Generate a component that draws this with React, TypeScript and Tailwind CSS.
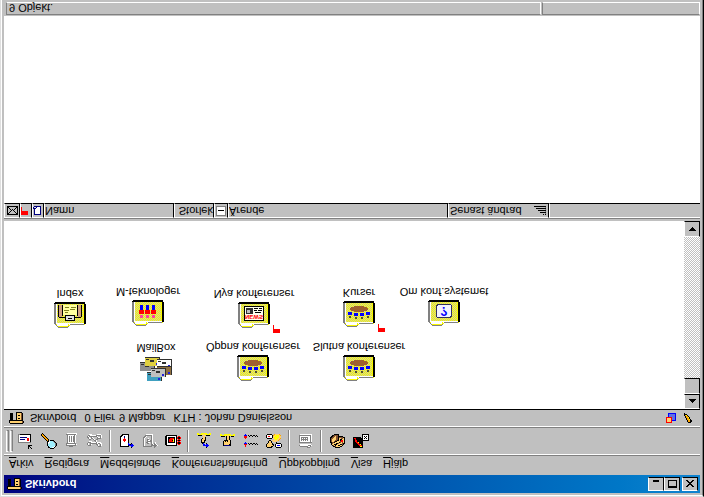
import type { ReactNode } from 'react';
import clsx from 'clsx';

const PALETTE: Record<string, string> = {
  k: '#000000',
  w: '#ffffff',
  g: '#808080',
  s: '#dcdcdc',
  r: '#ff0000',
  b: '#0000ff',
  d: '#000080',
  y: '#ffff00',
  t: '#ffd070',
  o: '#ffa500',
  n: '#805030',
  c: '#a0f0ff',
  v: '#6070e0',
};

interface SpriteProps {
  rows: string[];
}

// Pixel icon: one character per pixel, a dot is transparent
function Sprite({ rows }: SpriteProps) {
  const width = Math.max(...rows.map((row) => row.length));
  return (
    <svg
      width={width}
      height={rows.length}
      viewBox={`0 0 ${width} ${rows.length}`}
      shapeRendering="crispEdges"
      aria-hidden="true"
      className="shrink-0"
    >
      {rows.map((row, y) =>
        row
          .split('')
          .map((ch, x) =>
            PALETTE[ch] ? <rect key={`${x}-${y}`} x={x} y={y} width={1} height={1} fill={PALETTE[ch]} /> : null
          )
      )}
    </svg>
  );
}

const DESK = [
  '.kkkkkkkkkkkkk.',
  'kttttttttttttnk',
  'kttttttttttttnk',
  'kkkkkkkkkkkkkk.',
  '.kkk...kttttnk.',
  '.kkk...ktkktnk.',
  '.kkk...kttttnk.',
  '.kkk...kttttnk.',
  '.kkk...ktkktnk.',
  '.kkk...kttttnk.',
  '.kkk...kttttnk.',
  '.......kkkkkk..',
];

const NEW_MAIL = [
  '..........k..k..',
  '..........k.k...',
  '..........kk....',
  '..........kkkk..',
  '................',
  '................',
  'ggggggggggggg...',
  'gwwwwwwwwwwwk...',
  'gwwwwwwwwrrwk...',
  'gwdddddwwrrwk...',
  'gwwwwwwwwrrwk...',
  'gwdddddddwwwk...',
  'gwwwwwwwwwwwk...',
  'gwwwwwwwwwwwk...',
  'ggkkkkkkkkkkk...',
  '................',
];

const SEARCH = [
  '.........kkkk...',
  '.......kkccwwk..',
  '.......kcccccwk.',
  '......kcccccccgk',
  '......kcccccccgk',
  '......kwccccccgk',
  '......kwwccccgk.',
  '......kkwcccgk..',
  '.....kok.kkkk...',
  '....kook........',
  '...kook.........',
  '..kook..........',
  '.kook...........',
  'kook............',
  'kok.............',
  '.k..............',
];

const TRASH = [
  '................',
  '.....gggg.......',
  '..gggggggggg....',
  '..gwwwwwwwwgw...',
  '..gggggggggg....',
  '...gwwwwwwgw....',
  '...gwgwgwggw....',
  '...gwgwgwggw....',
  '...gwgwgwggw....',
  '...gwgwgwggw....',
  '...gwgwgwggw....',
  '...gwgwgwggw....',
  '...gwwwwwwgw....',
  '..ggggggggggw...',
  '...wwwwwwwwww...',
];

const KEYS = [
  '................',
  '...........ggg..',
  '.ggg......gw.gw.',
  'gw.gw....ggw.gw.',
  'gw.gggggggwggww.',
  '.gggwwwwwgwwww..',
  '..www...gw......',
  '.......ggw......',
  '..gg..gw.gg.....',
  '.gwwggw...gggg..',
  'ggw.gw....gwwgw.',
  'gwggggggggw..gw.',
  '.ggwwwwwwgggggw.',
  '..www.....wwww..',
];

const REPLY = [
  '............k...',
  '.kkkkkkkkk..bb..',
  '.kwwwwwwwkbbbbb.',
  '.kwwwwwwwbbkbb..',
  '.kwwwwwwwb..k...',
  '.kwwwwwwwk......',
  '.kwwwrwwwk......',
  '.kwwrrrwwk......',
  '.kwwrrrwwk......',
  '.kwwwrwwwk......',
  '.kwwwdwwwk......',
  '.kkwwdwwwk......',
  '..kkwwwwwk......',
  '...kkkkkkk......',
];

const REPLY_OFF = [
  '............g...',
  '.ggggggggg..gg..',
  '.gw......ggggggw',
  '.gw......ggwggw.',
  '.gw..gg..gw.gw..',
  '.gw.ggww.gw..w..',
  '.gw..gggggw.....',
  '.gw..gwwggw.....',
  '.gw..gg..gw.....',
  '.gw...w..gw.....',
  '.ggw.....gw.....',
  '..ggw....gw.....',
  '...gggggggw.....',
  '....wwwwwww.....',
];

const BOOK = [
  '................',
  '.kkkkkkkkkkk....',
  'kkwwwwwwwwwk.rr.',
  'kkwwwwwwwwwkrkkr',
  'kkwkkkkkkkwkrkkr',
  'kkwkrrrrykwk.rr.',
  'kkwkrrrkykwkrkkr',
  'kkwkrrrrykwk.rr.',
  'kkwkkrrrrkwkrkkr',
  'kkwkkkkkkkwkrkkr',
  'kkwwwwwwwwwk.rr.',
  '.kkkkkkkkkkk....',
];

const POINT_MOVE = [
  '.........k......',
  '.........bb.....',
  '......bbbbbb....',
  '......bb.bb.....',
  '.....kb..k......',
  '....kkkk........',
  '....kttk........',
  '....kttkk.......',
  '....ktttk.......',
  '.....kttk.......',
  '......ttk.......',
  '......tt........',
  '.kkkk.tt.kkkk...',
  'yyyyyyttyyyyyy..',
  'yy..yyyyyy..yy..',
];

const POINT = [
  '................',
  '................',
  '...kddddddk.....',
  '...ktttttkk.....',
  '...kttttttk.....',
  '...kttttttk.....',
  '...ktktkttk.....',
  '....kkkkttk.....',
  '......kttk......',
  '......kttk......',
  '......kttk......',
  '.kkkk.kttk.kkk..',
  'yyyyyyyttyyyyyy.',
  'yy..yyyyyyy..yy.',
];

const THREADS = [
  '..r.............',
  '..r.............',
  '.rrr..k..k..k.k.',
  '.bbb.k.kk.kk.k..',
  '..b.............',
  '................',
  '................',
  '................',
  '..r.............',
  '.rrr............',
  '.rrr..k..k..k.k.',
  '.bbb.k.kk.kk.k..',
  '..b.............',
];

const PEOPLE = [
  '.kkkkk....kkkkk.',
  'kttttkk..kwwwwwk',
  'kttttttk.kwbbbwk',
  'ktttttkk.kwwwwwk',
  '.kttttk...kkkkk.',
  '..kttk....k.....',
  '..kttk.tttt.....',
  '...kk.tttttto...',
  '........tyytto..',
  '.kkkkk.tyyyytto.',
  'kwwwwwktyyyyytt.',
  'kwrrwwkttyyyytt.',
  'kwwwwwkoytyyyto.',
  '.kkkkk..otttto..',
];

const DIAL_OFF = [
  '.........ggg....',
  '..ggggggggwwg...',
  '.gwwwwwwwwgggw..',
  '..wwwwwwwwwww...',
  '................',
  '.ggggggggggggg..',
  '.gwwwwwwwwwwgw..',
  '.gwgwgwgwgwwgw..',
  '.gwgggggggwwgw..',
  '.gwgwgwgwgwwgw..',
  '.gwgggggggwwgw..',
  '.gwwwwwwwwwwgw..',
  '.ggggggggggggw..',
  '..wwwwwwwwwwww..',
];

const BOX = [
  '.....kkkkk......',
  '...kknttttkk....',
  '..kntkttkkttk...',
  '.kttkkktttkknk..',
  '.kntttkkntttnkk.',
  'kknnkttttkntntk.',
  'knttnkktttnrrtk.',
  'kntttnnkktkrrtk.',
  'knttttnnktkkttk.',
  'knntttnnkttnntk.',
  'kknnttnnknnnnkk.',
  '.kknntnnkkkkk...',
  '..kknnnnk.......',
  '....kkkkk.......',
];

const EXIT = [
  'kkkkkkkkkk......',
  'kkkkkkkyyk......',
  'kkkkkkrrrk......',
  'kkkkkrrykk......',
  'kkkkrrkkkk......',
  'kkkrrykkkk......',
  'kkrrkkkkkk......',
  'kkrrkkkkkkkkkkkk',
  'kkrkkkkkkkwwwwwk',
  'krrkkkkkkkwkwkwk',
  'kkkkkkkk.kwwkwwk',
  '.........kwkwkwk',
  '.........kwwwwwk',
  '.........kkkkkkk',
];

const SQUARES = [
  'rrrrrr....',
  'rttttr....',
  'rttttrbbbb',
  'rttttrvvvb',
  'rttttrvvvb',
  'rrrrrrvvvb',
  '..bvvvvvvb',
  '..bvvvvvvb',
  '..bvvvvvvb',
  '..bbbbbbbb',
];

const PENCIL = [
  '....kkk.',
  '...kookk',
  '...kookk',
  '..kooyk.',
  '..kook..',
  '.kooyk..',
  '.kook...',
  'koyk....',
  'kkk.....',
  'k.......',
];

const ENVELOPE = [
  'kkkkkkkkkkk',
  'kk.......kk',
  'k.k.....k.k',
  'k..k...k..k',
  'k...k.k...k',
  'k..k.k.k..k',
  'k.k.....k.k',
  'kk.......kk',
  'kkkkkkkkkkk',
];

const FLAG = ['rrrrrrr', 'rrrrrrr', 'rrrrrrr', 'rrrrrrr', 'r......', 'r......', 'r......', 'r......'];

const NOTE = [
  '.ddddddd',
  '.dwwwwwd',
  '.dwwwwwd',
  '.dwwwwwd',
  '.dwwwwwd',
  '.dwwwwwd',
  'dddwwwwd',
  'dssdwwwd',
  '.ddddddd',
];

const SORT = [
  '.........k.k',
  '...........g',
  '......kkkkkk',
  '...........g',
  '....kkkkkkkk',
  '...........g',
  '..kkkkkkkkkk',
  '...........g',
  'kkkkkkkkkkkk',
];

const MINIMIZE = ['......', '......', '......', '......', '......', 'kkkkkk', 'kkkkkk'];
const MAXIMIZE = ['kkkkkkkkk', 'kkkkkkkkk', 'k.......k', 'k.......k', 'k.......k', 'k.......k', 'k.......k', 'kkkkkkkkk'];
const CLOSE = ['kk....kk', '.kk..kk.', '..kkkk..', '...kk...', '..kkkk..', '.kk..kk.', 'kk....kk'];
const ARROW_UP = ['...k...', '..kkk..', '.kkkkk.', 'kkkkkkk'];
const ARROW_DOWN = ['kkkkkkk', '.kkkkk.', '..kkk..', '...k...'];

type FolderKind = 'index' | 'people' | 'news' | 'meeting' | 'help';

// Every other pixel of the folder face, checkerboard fashion
const DITHER = Array.from({ length: 19 }, (_, row) =>
  Array.from({ length: 13 }, (_, col) => `M${3 + col * 2 + (row % 2)} ${6 + row}h1v1h-1z`).join('')
).join('');

function FolderIcon({ kind }: { kind: FolderKind }) {
  return (
    <svg width={32} height={27} viewBox="0 0 32 27" shapeRendering="crispEdges" aria-hidden="true">
      <path d="M1 4h1v-1h1v-1h1v-1h10v1h1v1h1v1h15v21h-30z" fill="#f8f800" />
      <path d={DITHER} fill="#d0d0a0" />
      <path d="M2 3h1v-1h1v-1h10v1h1v1h-1v-1h-10v1h-1v1h-1zM1 4h1v21h-1zM15 4h15v1h-15zM0 5h1v20h-1z" fill="#808080" />
      <path d="M2 5h13v-1h1v1h14v1h-28zM2 5h1v20h-1zM3 3h11v2h-11z" fill="#ffffff" />
      <path d="M30 5h2v20h-1v2h-30v-1h-1v-1h30z" fill="#000000" />
      {kind === 'index' && (
        <>
          <path d="M9 14h14v10h-14z" fill="#ffffa0" />
          <path d="M11 21h4v1h-4zM17 21h5v1h-5zM10 18h5v1h-5zM16 19h5v1h-5zM11 16h3v1h-3z" fill="#808020" />
          <path d="M5 12h3v12h-3zM24 12h3v12h-3z" fill="#d0a080" />
          <path d="M8 13h1v11h-1zM23 13h1v11h-1zM5 11h6v1h-6zM21 11h6v1h-6zM4 12h1v12h-1zM27 12h1v12h-1z" fill="#000000" />
          <path d="M11 8h10v6h-10z" fill="#000000" />
          <path d="M12 9h8v4h-8z" fill="#e0e0e0" />
          <path d="M14 10h4v1h-4z" fill="#000000" />
        </>
      )}
      {kind === 'people' &&
        [8, 14, 20].map((x) => (
          <g key={x}>
            <rect x={x} y={9} width={3} height={3} fill="#ff40a0" />
            <rect x={x - 1} y={13} width={5} height={4} fill="#ff0000" />
            <rect x={x} y={17} width={3} height={5} fill="#0000ff" />
          </g>
        ))}
      {kind === 'news' && (
        <>
          <rect x={6} y={8} width={20} height={15} fill="#000000" />
          <rect x={7} y={9} width={18} height={13} fill="#fffff0" />
          <rect x={8} y={15} width={7} height={6} fill="#303030" />
          <rect x={9} y={16} width={3} height={3} fill="#c0c0c0" />
          <path d="M16 20h4v1h-4zM21 20h3v1h-3zM16 18h3v1h-3zM20 18h4v1h-4zM17 16h6v1h-6z" fill="#000000" />
          <text x={16} y={14} textAnchor="middle" fontSize={6} fontWeight={700} fill="#ff0000">
            NEWS
          </text>
        </>
      )}
      {kind === 'meeting' && (
        <>
          <ellipse cx={16} cy={19} rx={9} ry={3} fill="#a06030" />
          <path d="M6 10h2v2h-2zM12 9h2v2h-2zM18 9h2v2h-2zM24 10h2v2h-2z" fill="#505030" />
          <path d="M5 13h4v3h-4zM11 12h4v3h-4zM17 12h4v3h-4zM23 13h4v3h-4z" fill="#0000ff" />
        </>
      )}
      {kind === 'help' && (
        <>
          <rect x={8} y={9} width={16} height={14} rx={3} fill="#303060" />
          <rect x={9} y={10} width={14} height={12} rx={2} fill="#f4f4ff" />
          <text x={16} y={20} textAnchor="middle" fontSize={12} fontWeight={700} fill="#0000ff">
            ?
          </text>
        </>
      )}
    </svg>
  );
}

const LETTERS = [
  { x: 0, y: 12, fill: '#909090' },
  { x: 5, y: 17, fill: '#e0d040' },
  { x: 17, y: 15, fill: '#ffffff' },
  { x: 17, y: 8, fill: '#907040' },
  { x: 7, y: 2, fill: '#40a0c0' },
  { x: 11, y: 6, fill: '#c0c0c0' },
];

function MailBoxIcon() {
  return (
    <svg width={32} height={27} viewBox="0 0 32 27" shapeRendering="crispEdges" aria-hidden="true">
      {LETTERS.map(({ x, y, fill }) => (
        <g key={fill}>
          <rect x={x} y={y} width={15} height={9} fill="#303030" />
          <rect x={x} y={y} width={14} height={8} fill={fill} />
          <rect x={x + 5} y={y + 4} width={4} height={2} fill="#303030" />
          <rect x={x + 1} y={y + 6} width={3} height={1} fill="#303030" />
          <rect x={x + 11} y={y + 1} width={2} height={2} fill="#2020e0" />
        </g>
      ))}
    </svg>
  );
}

const MENUS = ['Arkiv', 'Redigera', 'Meddelande', 'Konferenshantering', 'Uppkoppling', 'Visa', 'Hjälp'];

const TOOL_GROUPS = [
  [
    { label: 'Nytt meddelande', rows: NEW_MAIL },
    { label: 'Sök', rows: SEARCH },
    { label: 'Ta bort', rows: TRASH },
    { label: 'Behörigheter', rows: KEYS },
  ],
  [
    { label: 'Svara', rows: REPLY },
    { label: 'Vidarebefordra', rows: REPLY_OFF },
    { label: 'Adressbok', rows: BOOK },
  ],
  [
    { label: 'Nästa olästa', rows: POINT_MOVE },
    { label: 'Nästa', rows: POINT },
    { label: 'Trådar', rows: THREADS },
    { label: 'Deltagare', rows: PEOPLE },
  ],
  [{ label: 'Ring upp', rows: DIAL_OFF }],
  [
    { label: 'Arkivera', rows: BOX },
    { label: 'Avsluta', rows: EXIT },
  ],
];

interface DesktopItem {
  name: string;
  icon: ReactNode;
  place: string;
  flagged?: boolean;
}

const ITEMS: DesktopItem[] = [
  { name: 'MailBox', icon: <MailBoxIcon />, place: 'left-[104px] top-[26px]' },
  { name: 'Öppna konferenser', icon: <FolderIcon kind="meeting" />, place: 'left-[201px] top-[27px]' },
  { name: 'Slutna konferenser', icon: <FolderIcon kind="meeting" />, place: 'left-[307px] top-[27px]' },
  { name: 'Index', icon: <FolderIcon kind="index" />, place: 'left-[18px] top-[80px]' },
  { name: 'M-teknologer', icon: <FolderIcon kind="people" />, place: 'left-[96px] top-[82px]' },
  { name: 'Nya konferenser', icon: <FolderIcon kind="news" />, place: 'left-[202px] top-[80px]', flagged: true },
  { name: 'Kurser', icon: <FolderIcon kind="meeting" />, place: 'left-[307px] top-[81px]', flagged: true },
  { name: 'Om konf.systemet', icon: <FolderIcon kind="help" />, place: 'left-[392px] top-[82px]' },
];

const RAISED = 'flex items-center justify-center border border-t-white border-l-white border-r-black border-b-black bg-[#c0c0c0]';

function TitleButton({ label, rows }: { label: string; rows: string[] }) {
  return (
    <button aria-label={label} className={clsx(RAISED, 'h-3.5 w-4')}>
      <Sprite rows={rows} />
    </button>
  );
}

function HeaderCell({ children, className }: { children?: ReactNode; className?: string }) {
  return (
    <th
      className={clsx(
        'h-[15px] overflow-hidden border-t border-r border-b border-l border-t-white border-l-white border-r-black border-b-black p-0 text-left font-normal',
        className
      )}
    >
      <div className="flex h-3 items-center">{children}</div>
    </th>
  );
}

function ScrollBar() {
  return (
    <div className="flex w-4 shrink-0 flex-col bg-[repeating-conic-gradient(#c0c0c0_0_25%,#ffffff_0_50%)] bg-[length:2px_2px]">
      <button aria-label="Rulla upp" className={clsx(RAISED, 'h-[15px]')}>
        <Sprite rows={ARROW_UP} />
      </button>
      <div className={clsx(RAISED, 'h-4')} />
      <button aria-label="Rulla ned" className={clsx(RAISED, 'mt-auto h-4')}>
        <Sprite rows={ARROW_DOWN} />
      </button>
    </div>
  );
}

export default function App() {
  return (
    // The whole window is mirrored top to bottom
    <div className="flex min-h-screen -scale-y-100 flex-col border-t border-r border-l border-t-[#dfdfdf] border-r-black border-l-[#dfdfdf] bg-[#c0c0c0] font-['Liberation_Sans',Arial,sans-serif] text-[11px] leading-3 text-black">
      <div className="flex flex-1 flex-col border-t border-r border-l border-t-white border-r-[#808080] border-l-white pt-0.5 pr-0.5 pl-0.5">
        {/* Title bar */}
        <header className="flex h-[18px] items-center bg-linear-to-r from-[#000080] to-[#1084d0] pr-0.5 pl-[3px]">
          <Sprite rows={DESK} />
          <h1 className="ml-[3px] flex-1 text-[11px] font-bold text-white">Skrivbord</h1>
          <TitleButton label="Minimera" rows={MINIMIZE} />
          <TitleButton label="Maximera" rows={MAXIMIZE} />
          <div className="ml-0.5 flex">
            <TitleButton label="Stäng" rows={CLOSE} />
          </div>
        </header>

        {/* Menu */}
        <nav className="flex h-5 items-center gap-[11px] border-b border-[#808080] pt-0.5 pl-[5px]">
          {MENUS.map((menu) => (
            <button key={menu}>
              <span className="underline underline-offset-2">{menu[0]}</span>
              {menu.slice(1)}
            </button>
          ))}
        </nav>

        {/* Toolbar */}
        <div className="flex h-7 items-stretch border-t border-b border-t-white border-b-[#808080] py-0.5 pl-0.5">
          <div className="mr-px flex gap-px">
            <div className="w-[3px] border border-t-white border-r-[#808080] border-b-[#808080] border-l-white" />
            <div className="w-[3px] border border-t-white border-r-[#808080] border-b-[#808080] border-l-white" />
          </div>
          {TOOL_GROUPS.map((group, i) => (
            <div key={i} className="flex">
              {i > 0 && <div className="mr-1 ml-[3px] w-0.5 border-r border-l border-r-white border-l-[#808080]" />}
              {group.map(({ label, rows }) => (
                <button key={label} aria-label={label} className="flex w-[23px] items-center justify-center">
                  <Sprite rows={rows} />
                </button>
              ))}
            </div>
          ))}
        </div>

        {/* Folder info */}
        <div className="flex h-[18px] items-center border-t border-b border-t-white border-b-black pr-2 pl-[5px]">
          <Sprite rows={DESK} />
          <span className="ml-1.5">Skrivbord</span>
          <span className="ml-2">0 Filer</span>
          <span className="ml-1">9 Mappar</span>
          <span className="ml-2 flex-1">KTH : Johan Danielsson</span>
          <Sprite rows={SQUARES} />
          <div className="ml-2 flex">
            <Sprite rows={PENCIL} />
          </div>
        </div>

        {/* Desktop */}
        <main className="flex min-h-36 grow basis-0 bg-white">
          <div className="relative flex-1">
            {ITEMS.map(({ name, icon, place, flagged }) => (
              <button key={name} className={clsx('absolute flex w-24 flex-col items-center gap-0.5', place)}>
                {icon}
                <span className="whitespace-nowrap">{name}</span>
                {flagged && (
                  <span className="absolute -top-1 left-[67px]">
                    <Sprite rows={FLAG} />
                  </span>
                )}
              </button>
            ))}
          </div>
          <ScrollBar />
        </main>

        {/* File list */}
        <table className="mt-0.5 w-full table-fixed border-separate border-spacing-0 border-t border-[#808080]">
          <thead>
            <tr>
              <HeaderCell className="w-4">
                <span className="mx-auto">
                  <Sprite rows={ENVELOPE} />
                </span>
              </HeaderCell>
              <HeaderCell className="w-3">
                <Sprite rows={FLAG} />
              </HeaderCell>
              <HeaderCell className="w-3">
                <Sprite rows={NOTE} />
              </HeaderCell>
              <HeaderCell className="w-[130px]">Namn</HeaderCell>
              <HeaderCell className="w-10">
                <span className="ml-auto">Storlek</span>
              </HeaderCell>
              <HeaderCell className="w-3.5">
                <button
                  aria-label="Dölj"
                  className="mx-px flex h-2.5 w-2.5 items-center justify-center border border-[#808080] bg-white"
                >
                  <span className="h-px w-1.5 bg-black" />
                </button>
              </HeaderCell>
              <HeaderCell className="w-[220px]">Ärende</HeaderCell>
              <HeaderCell className="w-[101px] pr-0.5">
                <span className="flex-1 pl-px">Senast ändrad</span>
                <Sprite rows={SORT} />
              </HeaderCell>
              <th className="border-t border-b border-l border-t-white border-b-black border-l-white p-0" />
            </tr>
          </thead>
        </table>
        <div className="min-h-24 grow basis-0 bg-white" />

        {/* Status bar */}
        <footer className="flex h-4 gap-px pt-px pb-0.5 pl-0.5">
          <div className="w-[535px] border border-t-[#808080] border-r-white border-b-white border-l-[#808080] pl-0.5">
            9 Objekt.
          </div>
          <div className="flex-1 border border-t-[#808080] border-r-white border-b-white border-l-[#808080]" />
        </footer>
      </div>
    </div>
  );
}
